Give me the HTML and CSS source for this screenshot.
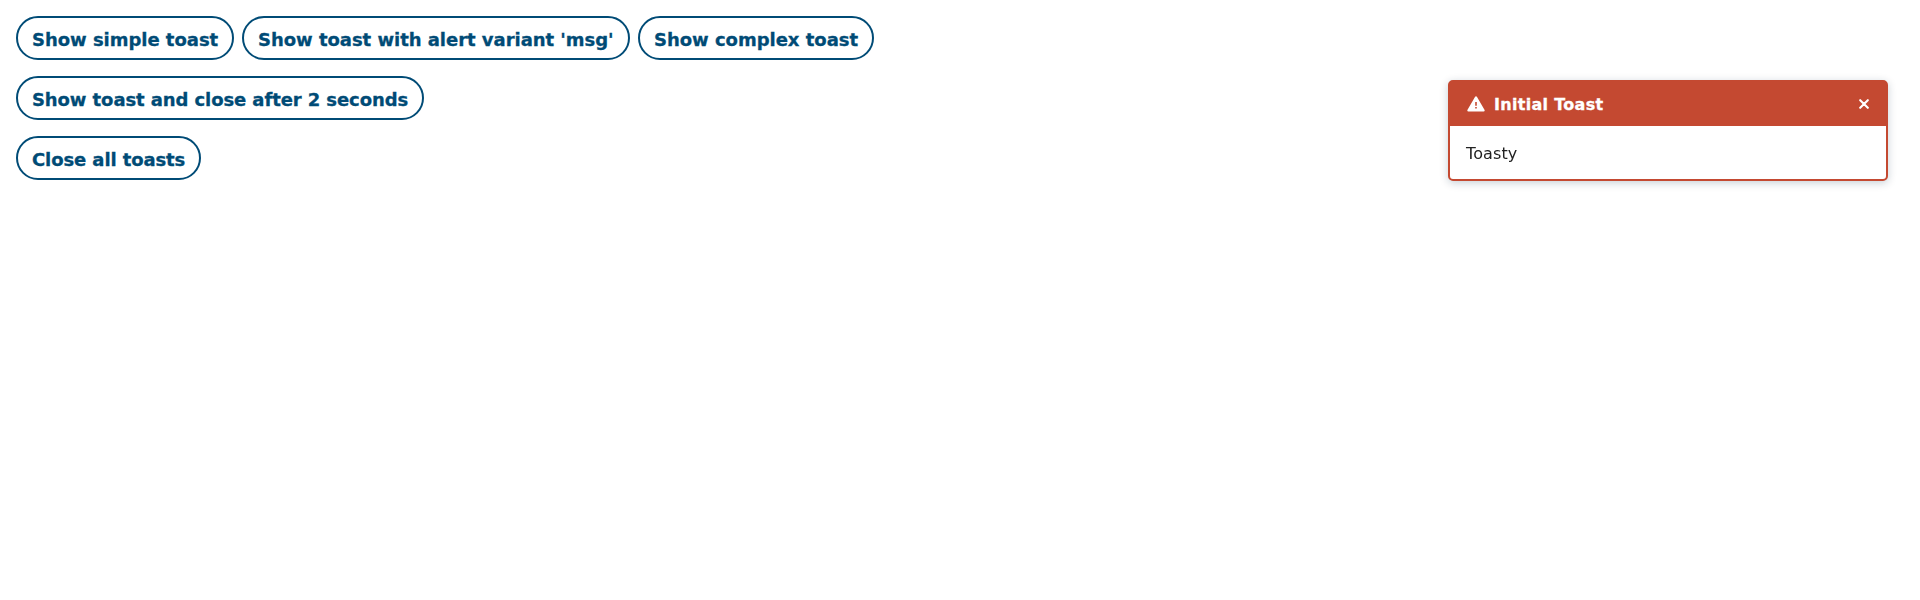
FILE: index.html
```
<!DOCTYPE html>
<html lang="en">
<head>
<meta charset="utf-8">
<title>Toasts</title>
<link rel="stylesheet" href="styles.css">
</head>
<body>
<main class="actions">
  <div class="row">
    <button class="btn btn-simple">Show simple toast</button>
    <button class="btn btn-variant">Show toast with alert variant 'msg'</button>
    <button class="btn btn-complex">Show complex toast</button>
  </div>
  <div class="row"><button class="btn btn-timed">Show toast and close after 2 seconds</button></div>
  <div class="row"><button class="btn btn-close">Close all toasts</button></div>
</main>
<section class="toast" role="alert">
  <header class="toast-header">
    <svg class="warn" viewBox="0 0 18 16"><path fill="#fff" fill-rule="evenodd" d="M8.1.8Q9-.1 9.9.8L17.6 14Q18 15.5 16.6 15.5H1.4Q0 15.5.4 14ZM8.2 6V9.8H9.8V6ZM8.2 11V12.5H9.8V11Z"/></svg>
    <span class="toast-title">Initial Toast</span>
    <svg class="close" viewBox="0 0 10 10"><path d="M1.2 1.2 8.8 8.8M8.8 1.2 1.2 8.8" stroke="#fff" stroke-width="2.1" stroke-linecap="round"/></svg>
  </header>
  <div class="toast-body"><span class="toast-text">Toasty</span></div>
</section>
</body>
</html>
```
FILE: styles.css
```
* { box-sizing: border-box; }
body { margin: 0; background: #fff; font-family: Verdana, "DejaVu Sans", sans-serif; }
.actions { display: flex; flex-direction: column; gap: 16px; padding: 16px; }
.row { display: flex; gap: 8px; }
.btn {
  height: 44px; padding: 3px 0 0 14px; border: 2px solid #004b76; border-radius: 22px;
  background: #fff; color: #004b76; font: bold 18px/24px Verdana, "DejaVu Sans", sans-serif;
  text-align: left; white-space: nowrap; -webkit-text-stroke: .3px #004b76;
}
.btn-simple { width: 218px; letter-spacing: -.03px; }
.btn-variant { width: 388px; letter-spacing: -.03px; }
.btn-complex { width: 236px; letter-spacing: -.02px; }
.btn-timed { width: 408px; letter-spacing: -.09px; }
.btn-close { width: 185px; letter-spacing: -.1px; }
.toast {
  position: fixed; top: 80px; right: 32px; width: 440px; height: 101px;
  border: 2px solid #c44931; border-radius: 5px; background: #fff; color: #222;
  box-shadow: 0 2px 8px rgba(0, 40, 70, .22);
}
.toast-header { display: flex; align-items: center; height: 44px; padding: 0 17px; background: #c44931; color: #fff; }
.warn { width: 18px; height: 16px; margin-right: 9px; }
.toast-title { padding-top: 2px; font-weight: bold; font-size: 16px; line-height: 24px; letter-spacing: .3px; -webkit-text-stroke: .3px #fff; }
.close { width: 10px; height: 10px; margin-left: auto; }
.toast-body { padding: 17px 16px 15px; font-size: 16px; line-height: 22px; letter-spacing: .1px; }
```
